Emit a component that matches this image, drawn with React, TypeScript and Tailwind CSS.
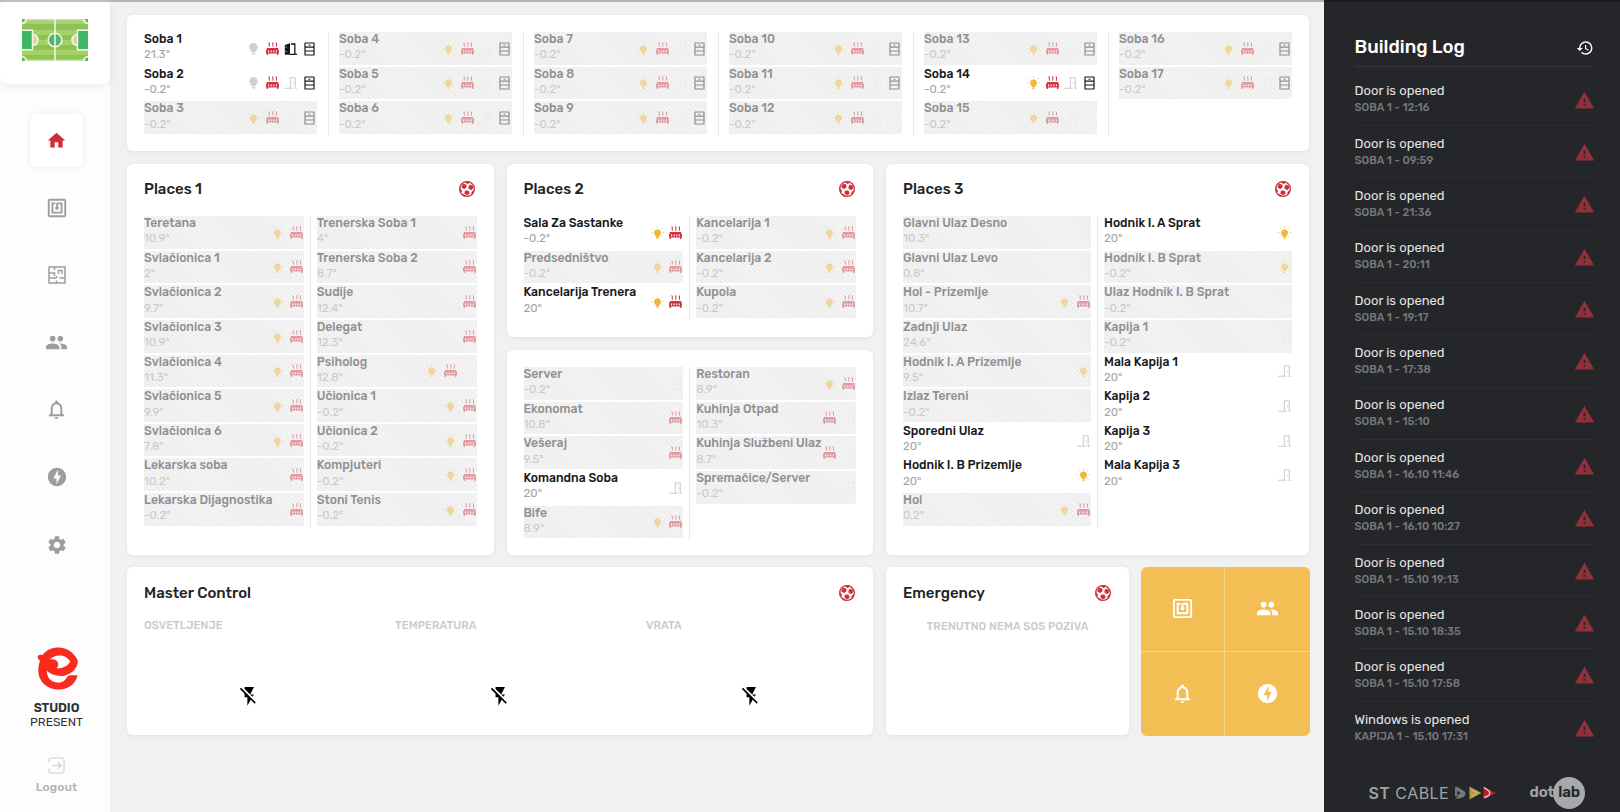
import React from 'react';
import clsx from 'clsx';
import {
  MdFlashOff,
  MdGroup,
  MdHistory,
  MdHome,
  MdNfc,
  MdNotificationsNone,
  MdOfflineBolt,
  MdSettings,
  MdWarning,
} from 'react-icons/md';

type Device = 'bulb' | 'bulbOff' | 'heat' | 'window' | 'door' | 'safe' | 'none';

interface Room {
  name: string;
  temp: string;
  devices: Device[];
  active?: boolean;
}

const room = (name: string, temp: string, devices: Device[] = [], active = false): Room => ({
  name,
  temp,
  devices,
  active,
});

const full: Device[] = ['bulb', 'heat', 'door', 'safe'];
const lit: Device[] = ['bulb', 'heat'];

const SOBE: Room[][] = [
  [
    room('Soba 1', '21.3°', ['bulbOff', 'heat', 'window', 'safe'], true),
    room('Soba 2', '-0.2°', ['bulbOff', 'heat', 'door', 'safe'], true),
    room('Soba 3', '-0.2°', full),
  ],
  [room('Soba 4', '-0.2°', full), room('Soba 5', '-0.2°', full), room('Soba 6', '-0.2°', full)],
  [room('Soba 7', '-0.2°', full), room('Soba 8', '-0.2°', full), room('Soba 9', '-0.2°', full)],
  [
    room('Soba 10', '-0.2°', full),
    room('Soba 11', '-0.2°', full),
    room('Soba 12', '-0.2°', ['bulb', 'heat', 'door', 'none']),
  ],
  [
    room('Soba 13', '-0.2°', full),
    room('Soba 14', '-0.2°', full, true),
    room('Soba 15', '-0.2°', ['bulb', 'heat', 'door', 'none']),
  ],
  [room('Soba 16', '-0.2°', full), room('Soba 17', '-0.2°', full)],
];

const PLACES_1: Room[][] = [
  [
    room('Teretana', '10.9°', lit),
    room('Svlačionica 1', '2°', lit),
    room('Svlačionica 2', '9.7°', lit),
    room('Svlačionica 3', '10.9°', lit),
    room('Svlačionica 4', '11.3°', lit),
    room('Svlačionica 5', '9.9°', lit),
    room('Svlačionica 6', '7.8°', lit),
    room('Lekarska soba', '10.2°', ['heat']),
    room('Lekarska Dijagnostika', '-0.2°', ['heat']),
  ],
  [
    room('Trenerska Soba 1', '4°', ['heat']),
    room('Trenerska Soba 2', '8.7°', ['heat']),
    room('Sudije', '12.4°', ['heat']),
    room('Delegat', '12.3°', ['heat']),
    room('Psiholog', '12.8°', ['bulb', 'heat', 'none']),
    room('Učionica 1', '-0.2°', lit),
    room('Učionica 2', '-0.2°', lit),
    room('Kompjuteri', '-0.2°', lit),
    room('Stoni Tenis', '-0.2°', lit),
  ],
];

const PLACES_2: Room[][] = [
  [
    room('Sala Za Sastanke', '-0.2°', lit, true),
    room('Predsedništvo', '-0.2°', lit),
    room('Kancelarija Trenera', '20°', lit, true),
  ],
  [room('Kancelarija 1', '-0.2°', lit), room('Kancelarija 2', '-0.2°', lit), room('Kupola', '-0.2°', lit)],
];

const SERVICE: Room[][] = [
  [
    room('Server', '-0.2°', ['door']),
    room('Ekonomat', '10.8°', ['heat']),
    room('Vešeraj', '9.5°', ['heat']),
    room('Komandna Soba', '20°', ['door'], true),
    room('Bife', '8.9°', lit),
  ],
  [
    room('Restoran', '8.9°', lit),
    room('Kuhinja Otpad', '10.3°', ['heat', 'door']),
    room('Kuhinja Službeni Ulaz', '8.7°', ['heat', 'door']),
    room('Spremačice/Server', '-0.2°', ['door']),
  ],
];

const PLACES_3: Room[][] = [
  [
    room('Glavni Ulaz Desno', '10.3°', ['door']),
    room('Glavni Ulaz Levo', '0.8°', ['door']),
    room('Hol - Prizemlje', '10.7°', lit),
    room('Zadnji Ulaz', '24.6°', ['door']),
    room('Hodnik I. A Prizemlje', '9.5°', ['bulb']),
    room('Izlaz Tereni', '-0.2°'),
    room('Sporedni Ulaz', '20°', ['door'], true),
    room('Hodnik I. B Prizemlje', '20°', ['bulb'], true),
    room('Hol', '0.2°', lit),
  ],
  [
    room('Hodnik I. A Sprat', '20°', ['bulb'], true),
    room('Hodnik I. B Sprat', '-0.2°', ['bulb']),
    room('Ulaz Hodnik I. B Sprat', '-0.2°'),
    room('Kapija 1', '-0.2°', ['door']),
    room('Mala Kapija 1', '20°', ['door'], true),
    room('Kapija 2', '20°', ['door'], true),
    room('Kapija 3', '20°', ['door'], true),
    room('Mala Kapija 3', '20°', ['door'], true),
  ],
];

const LOG = [
  ['Door is opened', 'SOBA 1 - 12:16'],
  ['Door is opened', 'SOBA 1 - 09:59'],
  ['Door is opened', 'SOBA 1 - 21:36'],
  ['Door is opened', 'SOBA 1 - 20:11'],
  ['Door is opened', 'SOBA 1 - 19:17'],
  ['Door is opened', 'SOBA 1 - 17:38'],
  ['Door is opened', 'SOBA 1 - 15:10'],
  ['Door is opened', 'SOBA 1 - 16.10 11:46'],
  ['Door is opened', 'SOBA 1 - 16.10 10:27'],
  ['Door is opened', 'SOBA 1 - 15.10 19:13'],
  ['Door is opened', 'SOBA 1 - 15.10 18:35'],
  ['Door is opened', 'SOBA 1 - 15.10 17:58'],
  ['Windows is opened', 'KAPIJA 1 - 15.10 17:31'],
];

function DeviceIcon({ type, active }: { type: Device; active?: boolean }) {
  const base = 'w-[13px] h-[14px] shrink-0 overflow-visible';

  switch (type) {
    case 'bulb':
      return (
        <svg viewBox="0 0 13 14" className={base}>
          <path d="M6.5 3.2a3.6 3.6 0 0 0-2.2 6.4l.7 1.3h3l.7-1.3a3.6 3.6 0 0 0-2.2-6.4z" fill="#efb73e" />
          <path d="M5.1 11.4h2.8v.9l-.9.8H6l-.9-.8z" fill="#efb73e" />
          <path
            d="M6.5.3v1.3M.1 6.7h1.4M11.5 6.7h1.4M1.9 2.1l1 1M11.1 2.1l-1 1M1.7 11l1-.9M11.3 11l-1-.9"
            stroke="#f3c45e"
            strokeWidth=".9"
          />
        </svg>
      );
    case 'bulbOff':
      return (
        <svg viewBox="0 0 13 14" className={base}>
          <path d="M6.5 1a4.3 4.3 0 0 0-2.7 7.6l.8 1.7h3.8l.8-1.7A4.3 4.3 0 0 0 6.5 1z" fill="#cfcfcf" />
          <path d="M4.8 10.9h3.4v.9l-1 1H5.8l-1-1z" fill="#cfcfcf" />
        </svg>
      );
    case 'heat':
      return (
        <svg viewBox="0 0 13 14" className={base}>
          <path
            d="M2.4.9h.9v3.800M6 .9h.9v3.800M9.600.9h.9v3.800"
            fill="none"
            stroke="#cf3641"
            strokeWidth="1"
          />
          <path d="M.7 6h11.600v1.900h.7v3.700h-.7V13H11v-1.400H2V13H.7v-1.400H0V7.900h.7z" fill="#cf3641" />
          <path d="M2.600 8.400v1.900M5.200 8.400v1.900M7.800 8.400v1.900M10.400 8.400v1.900" stroke="#fff" strokeWidth="1.100" />
        </svg>
      );
    case 'window':
      return (
        <svg viewBox="0 0 13 14" className={base}>
          <path d="M.8 3 6 1.300v11.400H.8z" fill="#17181b" />
          <path d="M1.500 5.200h1.200M1.500 9.500h1.200" stroke="#fff" strokeWidth=".7" />
          <path d="M7 2h3.800v10.300M6 12.300h7" fill="none" stroke="#17181b" strokeWidth="1.300" />
        </svg>
      );
    case 'door':
      return (
        <svg viewBox="0 0 13 14" className={clsx(base, !active && 'opacity-25')}>
          <path d="M0 12.300h6.300V1.700h4.900v10.600H13M6.300 12.300h2.500" fill="none" stroke="#cdcdcd" strokeWidth="1.100" />
          <path d="M9.400 6.500v1.500" stroke="#cdcdcd" strokeWidth=".9" />
        </svg>
      );
    case 'safe':
      return (
        <svg viewBox="0 0 13 14" className={base}>
          <path
            d="M2 1h9v12H2zM2 5.100h9M2 9h9"
            fill="none"
            stroke="#17181b"
            strokeWidth="1.200"
            strokeLinejoin="round"
          />
          <path d="M5.500 3.200h2" stroke="#17181b" strokeWidth="1" />
        </svg>
      );
    default:
      return <span className={base} />;
  }
}

function RoomRow({ item }: { item: Room }) {
  return (
    <div className="h-[34.650px] pb-[2px]">
      <div
        className={clsx(
          'flex h-full justify-between pr-[1px]',
          !item.active &&
            'bg-[#efefef] bg-[repeating-linear-gradient(45deg,transparent_0px,transparent_2.5px,#f5f5f5_2.5px,#f5f5f5_3.5px)]',
        )}
      >
        <div className={clsx('whitespace-nowrap', !item.active && 'opacity-50')}>
          <p
            className={clsx(
              'text-[12.200px] leading-[14.300px] font-medium',
              item.active ? 'text-[#17181b]' : 'text-[#303135]',
            )}
          >
            {item.name}
          </p>
          <p className="text-[11.500px] leading-[17px] text-[#a4a4a4]">{item.temp}</p>
        </div>
        <div className={clsx('-ml-8 flex items-center gap-[5.7px] pt-px', !item.active && 'opacity-45')}>
          {item.devices.map((device, i) => (
            <DeviceIcon key={i} type={device} active={item.active} />
          ))}
        </div>
      </div>
    </div>
  );
}

function RoomColumns({ columns, wide = false }: { columns: Room[][]; wide?: boolean }) {
  return (
    <div className="flex">
      {columns.map((column, i) => (
        <React.Fragment key={i}>
          {i > 0 && <div className={clsx('w-px shrink-0 bg-[#e9e9e9]', wide ? 'mx-[10.5px]' : 'mx-[6px]')} />}
          <div className="min-w-0 flex-1">
            {column.map((item) => (
              <RoomRow key={item.name} item={item} />
            ))}
          </div>
        </React.Fragment>
      ))}
    </div>
  );
}

function BallIcon() {
  return (
    <svg viewBox="0 0 16 16" className="size-[16px] overflow-visible">
      <circle cx="8" cy="8" r="7.400" fill="#fff" stroke="#cb303b" strokeWidth="1.200" />
      <g fill="#cb303b" stroke="#cb303b" strokeWidth=".5">
        <path d="M3.800 3.100l3 .4.600 2.500-2.200 1.900-2.700-1.600z" />
        <path d="M10.400 3.900l2.900.6.800 2.700-2.100 1.700-2.400-1.600z" />
        <path d="M6.100 9.900l3.200-.2 1.200 2.600-2.100 1.900-2.700-1.600z" />
        <path d="M6.600.7h3.800l-.9 1.700H7.600z" />
        <path d="M.7 7.300l1.600 1.500.3 2.200-1.200.5z" />
        <path d="M15 9.300l-1.700 1.100-.9 2.200 1.100.8z" />
        <path d="M2.700 13.200l2.100.3 1.500 1.500-1.200.4z" />
      </g>
    </svg>
  );
}

function Card({ title, className, children }: { title?: string; className?: string; children?: React.ReactNode }) {
  return (
    <section className={clsx('rounded-[6px] bg-white px-[17px] pt-[17px] shadow-[0_1px_5px_rgba(0,0,0,0.06)]', className)}>
      {title && (
        <header className="mb-[17.500px] flex h-[18px] items-center justify-between">
          <h2 className="text-[15px] font-medium text-[#222327]">{title}</h2>
          <div className="mr-[1.500px] -mt-px">
            <BallIcon />
          </div>
        </header>
      )}
      {children}
    </section>
  );
}

function FieldLogo() {
  return (
    <svg viewBox="0 0 66 42" className="h-[42px] w-[66px]">
      <rect width="66" height="42" fill="#8fc255" />
      <path d="M0 1h66v4H0zM0 11h66v5H0zM0 21h66v5H0zM0 31h66v5H0z" fill="#a6d068" />
      <path d="M0 0h66v1.500H0zM0 40.500h66V42H0z" fill="#c5deb0" />
      <path d="M0 12h10v18H0zM56 12h10v18H56z" fill="#3fb568" />
      <path d="M10.500 15a6 6 0 0 1 0 12zM55.500 15a6 6 0 0 0 0 12z" fill="#d9d59c" />
      <circle cx="33" cy="21" r="6.500" fill="#4cb96c" />
      <g fill="none" stroke="#f3f9e6" strokeWidth="1.500">
        <path d="M33 0v42M0 11.200h10.500v19.600H0M66 11.200H55.500v19.600H66" />
        <path d="M10.500 15.500a5.500 5.500 0 0 1 0 11M55.500 15.500a5.500 5.500 0 0 0 0 11" />
        <circle cx="33" cy="21" r="6.800" />
        <path d="M0 4.500A4.500 4.500 0 0 0 4.500 0M66 4.500A4.500 4.500 0 0 1 61.500 0M0 37.500A4.500 4.500 0 0 1 4.500 42M66 37.500a4.500 4.500 0 0 0-4.500 4.500" />
      </g>
      <path d="M0 0h3L0 3zM66 0h-3l3 3zM0 42h3l-3-3zM66 42h-3l3-3z" fill="#43a77d" />
    </svg>
  );
}

function FloorPlanIcon() {
  return (
    <svg viewBox="0 0 18 18" className="size-[18px]" fill="none" stroke="currentColor" strokeWidth="1.500">
      <path d="M1 1h16v16H1zM6.500 1v3M1 7h5.500v3M10.500 8V4.500H14V8M1 12h7.500M8.500 10v2M8.500 14.500V17M11.500 12H17" />
    </svg>
  );
}

function StudioLogo() {
  return (
    <svg viewBox="0 0 42 43" className="h-[43px] w-[42px]">
      <path
        fill="#f92a1e"
        fillRule="evenodd"
        d="M1.500 9.500C3 7.500 4.500 7.800 6.500 8 10.500 3 16 .6 22.500.6 31 .6 38 5.800 41.500 13c.3.700.3 2 .1 3.200C40 23.500 33 28.500 25.500 29c-5.500.3-11-1.700-14.700-5.200C11 31 15 35 21.500 35.600c4.500.3 7.500-1.600 9.500-5.300 1-1.500 2-2 3.500-2h7c-1.500 8.500-9.500 14.500-19 14.300C10.500 42.300 2.300 34.500 2.300 23.500c0-3.300.5-6.500 1.700-9.600-1-1-2.300-2.500-2.500-4.400zM13.500 12.500c3.500-3.200 8-4.500 12-3.900 4 .6 7 3.100 8.800 6-2 3.500-5 5.600-9 6.400-1.700.4-3.500.3-4.800-.1 2.300-2 2.300-4.600.7-6.500-1.600-2-4.700-2.600-7.700-1.900z"
      />
    </svg>
  );
}

function LogoutIcon() {
  return (
    <svg viewBox="0 0 17 17" className="size-[17px]" fill="none" stroke="currentColor" strokeWidth="1.100">
      <path d="M1 5.500V2.500Q1 1 2.500 1h12Q16 1 16 2.500v12q0 1.500-1.500 1.500h-12Q1 16 1 14.500v-3M4 8.500h9M10 5.500l3 3-3 3" />
    </svg>
  );
}

function Sidebar() {
  const items = [
    <MdNfc key="nfc" className="size-[22px]" />,
    <FloorPlanIcon key="plan" />,
    <MdGroup key="group" className="size-[23px]" />,
    <MdNotificationsNone key="bell" className="size-[23px]" />,
    <MdOfflineBolt key="bolt" className="size-[22px]" />,
    <MdSettings key="settings" className="size-[22px]" />,
  ];

  return (
    <aside className="flex w-[110px] shrink-0 flex-col bg-[#fdfdfd]">
      <div className="flex h-[84px] justify-center rounded-[8px] bg-white pt-[19px] shadow-[0_2px_10px_rgba(0,0,0,0.08)]">
        <FieldLogo />
      </div>
      <nav className="mt-[22.500px] flex flex-col items-center pl-[3px] text-[#9d9d9d]">
        <div className="flex h-[67.400px] items-center">
          <div className="flex size-[53px] items-center justify-center rounded-[6px] bg-white shadow-[0_0_6px_rgba(0,0,0,0.08)]">
            <MdHome className="size-[21px] text-[#ce2f37]" />
          </div>
        </div>
        {items.map((icon, i) => (
          <div key={i} className="flex h-[67.400px] items-center">
            {icon}
          </div>
        ))}
      </nav>
      <div className="mt-[69px] flex flex-col items-center pl-[3px] text-[#2f3034]">
        <StudioLogo />
        <p className="mt-[10px] text-[12.500px] leading-[15px] font-semibold tracking-[-0.100px]">STUDIO</p>
        <p className="text-[12px] leading-[15px]">PRESENT</p>
      </div>
      <div className="mt-[26.500px] flex flex-col items-center pl-[3px] text-[#cfcfcf]">
        <LogoutIcon />
        <p className="mt-[5px] text-[12px] leading-[17px] font-medium tracking-[0.100px] text-[#b3b3b3]">Logout</p>
      </div>
    </aside>
  );
}

function MasterControl() {
  return (
    <Card title="Master Control" className="h-[168px] w-[746px]">
      <div className="flex gap-[44px]">
        {['OSVETLJENJE', 'TEMPERATURA', 'VRATA'].map((label) => (
          <div key={label} className="w-[207px]">
            <p className="mt-[-0.500px] text-[11px] leading-[14px] font-medium tracking-[0.100px] text-[#cacaca]">
              {label}
            </p>
            <MdFlashOff className="mt-[51.500px] ml-[93.600px] size-[22.500px] text-black" />
          </div>
        ))}
      </div>
    </Card>
  );
}

function QuickActions() {
  return (
    <div className="-ml-px grid h-[169px] w-[168.500px] grid-cols-2 grid-rows-2 overflow-hidden rounded-[6px] bg-[#f3bf55] text-white *:flex *:items-center *:justify-center *:border-[#f8d691]">
      <div className="border-r border-b">
        <MdNfc className="size-[23px]" />
      </div>
      <div className="border-b">
        <MdGroup className="size-[23px]" />
      </div>
      <div className="border-r">
        <MdNotificationsNone className="size-[23px]" />
      </div>
      <div>
        <MdOfflineBolt className="size-[23px]" />
      </div>
    </div>
  );
}

function BuildingLog() {
  return (
    <aside className="flex w-[296px] shrink-0 flex-col bg-[#25262a] pr-[26px] pl-[30.500px]">
      <header className="mt-[28px] flex h-[38.500px] items-center justify-between border-b border-[#35363a] pt-[2px]">
        <h2 className="text-[18.500px] font-medium text-white">Building Log</h2>
        <MdHistory className="size-[18px] text-white" />
      </header>
      <ul className="mt-[7px]">
        {LOG.map(([title, place], i) => (
          <li
            key={i}
            className={clsx(
              'flex h-[52.350px] items-center justify-between',
              i < LOG.length - 1 && 'border-b border-[#2d2e32]',
            )}
          >
            <div className="pt-[1.500px]">
              <p className="text-[13px] leading-[17px] text-[#e4e4e5]">{title}</p>
              <p className="text-[11px] leading-[18px] font-medium tracking-[0.050px] text-[#77787b]">{place}</p>
            </div>
            <MdWarning className="mr-[-1px] mt-[2px] size-[21px] text-[#92303a]" />
          </li>
        ))}
      </ul>
      <footer className="mt-auto mb-[3.500px] flex h-[32px] items-center pl-[14px] text-[#a3a3a5]">
        <p className="font-['Inter',sans-serif] text-[16px] leading-none tracking-[0.450px] whitespace-nowrap">
          <span className="font-semibold">ST</span> CABLE
        </p>
        <svg viewBox="0 0 42 14" className="ml-[6px] h-[14px] w-[42px] shrink-0">
          <path d="M0 1.500Q1 .5 2.500 1l7 4.500q1.500 1 1 2.500-1 3.500-6 4.500H0L3 10H0z" fill="#77787b" />
          <path d="M2 4.500l4 2.500-4 2.500z" fill="#333438" />
          <path d="M14.500.5l12 6.500-12 6.500z" fill="#b99b4b" />
          <path d="M17 4l5.500 3-5.500 3" fill="none" stroke="#e0c77e" strokeWidth=".8" />
          <path d="M28.500.5l12.500 6.500-12.500 6.500z" fill="#b4202c" />
          <path d="M29 1.500l5 3.500q2 3-1 5l-4 1.500" fill="none" stroke="#d9c8c9" strokeWidth="1.500" />
        </svg>
        <div className="ml-auto mr-[9px] flex items-center text-[15px] leading-none font-semibold tracking-[-0.200px]">
          <span className="mr-[-1px]">dot</span>
          <span className="flex size-[32px] items-center justify-center rounded-full bg-[#a8a8aa] text-[#25262a]">lab</span>
        </div>
      </footer>
    </aside>
  );
}

export default function App() {
  return (
    <div className="relative flex h-[812px] w-[1620px] overflow-hidden bg-[#f1f1f1] font-['Rubik','Roboto',sans-serif]">
      <div className="absolute inset-x-0 top-0 z-10 h-[1.500px] bg-black/25" />
      <Sidebar />

      <main className="flex flex-1 flex-col gap-[13px] pt-[15px] pl-[17px]">
        <Card className="h-[135.500px] w-[1182px]">
          <RoomColumns columns={SOBE} wide />
        </Card>

        <div className="flex h-[391px] gap-[13px]">
          <Card title="Places 1" className="w-[366.500px]">
            <RoomColumns columns={PLACES_1} />
          </Card>
          <div className="flex w-[366.500px] flex-col gap-[13px]">
            <Card title="Places 2" className="h-[173.500px]">
              <RoomColumns columns={PLACES_2} />
            </Card>
            <Card className="flex-1">
              <RoomColumns columns={SERVICE} />
            </Card>
          </div>
          <Card title="Places 3" className="w-[423px]">
            <RoomColumns columns={PLACES_3} />
          </Card>
        </div>

        <div className="-mt-[0.500px] flex gap-[13px]">
          <MasterControl />
          <Card title="Emergency" className="h-[168px] w-[243px]">
            <p className="mt-[3.500px] text-center text-[11px] leading-[14px] font-medium tracking-[0.150px] text-[#cacaca]">
              TRENUTNO NEMA SOS POZIVA
            </p>
          </Card>
          <QuickActions />
        </div>
      </main>

      <BuildingLog />
    </div>
  );
}
